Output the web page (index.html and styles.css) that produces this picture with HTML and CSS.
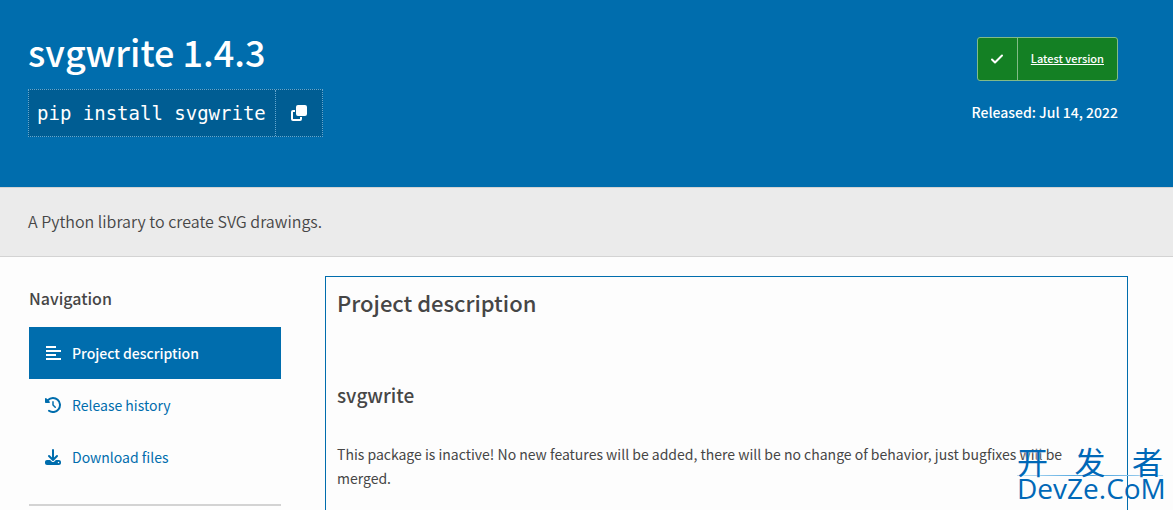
FILE: index.html
```
<!DOCTYPE html>
<html lang="en">
<head>
  <meta charset="UTF-8">
  <meta name="viewport" content="width=device-width, initial-scale=1.0">
  <title>svgwrite 1.4.3</title>
  <link rel="stylesheet" href="styles.css">
</head>
<body>
  <header class="banner">
    <div class="package">
      <h1>svgwrite 1.4.3</h1>
      <div class="pip">
        <code>pip install svgwrite</code>
        <button type="button" aria-label="Copy PIP instructions">
          <svg viewBox="0 0 512 512" width="16" height="16"><path d="M224 0h224a64 64 0 0 1 64 64v224a64 64 0 0 1-64 64H224a64 64 0 0 1-64-64V64a64 64 0 0 1 64-64zM64 160h64v64H64v224h224v-64h64v64a64 64 0 0 1-64 64H64a64 64 0 0 1-64-64V224a64 64 0 0 1 64-64z"/></svg>
        </button>
      </div>
    </div>
    <div class="release">
      <a class="status" href="#latest">
        <span class="check"><svg viewBox="0 0 14 14" width="14" height="14"><path d="M2 7.5l3 3 7-7" fill="none" stroke="currentColor" stroke-width="2" stroke-linecap="round" stroke-linejoin="round"/></svg></span>
        <span class="label">Latest version</span>
      </a>
      <p>Released: <time datetime="2022-07-14">Jul 14, 2022</time></p>
    </div>
  </header>

  <div class="summary">
    <p>A Python library to create SVG drawings.</p>
  </div>

  <main>
    <aside>
      <h2>Navigation</h2>
      <nav>
        <a class="active" href="#description">
          <svg viewBox="0 0 16 16" width="16" height="16"><path d="M1 1h10v2H1zM1 5h15v2H1zM1 9h10v2H1zM1 13h15v2H1z"/></svg>
          Project description
        </a>
        <a href="#history">
          <svg viewBox="0 0 512 512" width="16" height="16"><path d="M75 75 41 41C26 26 0 37 0 58v110c0 13 11 24 24 24h110c21 0 32-26 17-41l-31-31A192 192 0 1 1 146 413a32 32 0 0 0-37 53A256 256 0 1 0 75 75zm181 53c-13 0-24 11-24 24v104c0 6 3 12 7 17l72 72c9 9 25 9 34 0s9-25 0-34l-65-65v-94c0-13-11-24-24-24z"/></svg>
          Release history
        </a>
        <a href="#files">
          <svg viewBox="0 0 512 512" width="16" height="16"><path d="M288 32a32 32 0 0 0-64 0v243l-73-74a32 32 0 0 0-46 46l128 128c13 12 33 12 46 0l128-128a32 32 0 0 0-46-46l-73 74V32zM64 352c-35 0-64 29-64 64v32c0 35 29 64 64 64h384c35 0 64-29 64-64v-32c0-35-29-64-64-64H347l-46 45a64 64 0 0 1-90 0l-46-45H64zm368 56a24 24 0 1 1 0 48 24 24 0 0 1 0-48z"/></svg>
          Download files
        </a>
      </nav>
    </aside>

    <article id="description">
      <h2>Project description</h2>
      <h3>svgwrite</h3>
      <p>This package is inactive! No new features will be added, there will be no change of behavior, just bugfixes will be merged.</p>
    </article>
  </main>

  <div class="watermark">
    <div class="hanzi" lang="zh"><span>开</span><span>发</span><span>者</span></div>
    <div class="domain">DevZe.CoM</div>
  </div>
</body>
</html>
```

FILE: styles.css
```
* { box-sizing: border-box; }

html, body {
  height: 100%;
  overflow: hidden;
}

body {
  display: flex;
  flex-direction: column;
  margin: 0;
  background: #fdfdfd;
  color: #464646;
  font: 14px/24px "Noto Sans CJK SC", "Noto Sans", sans-serif;
}

h1, h2, h3, p { margin: 0; }

a { text-decoration: none; }

svg { fill: currentColor; }

/* Banner */

.banner {
  display: flex;
  justify-content: space-between;
  padding: 27px 55px 50px 28px;
  background: #006dad;
  color: #fff;
}

h1 {
  margin-bottom: 14px;
  font-size: 36px;
  font-weight: 500;
  line-height: 48px;
}

.pip {
  display: flex;
  width: max-content;
  height: 48px;
  border: 1px dotted #66a7ce;
  background: #005d93;
}

.pip code {
  padding: 0 9px 0 8px;
  font: 19px/46px "DejaVu Sans Mono", monospace;
}

.pip button {
  display: grid;
  place-items: center;
  width: 47px;
  border: 0;
  border-left: 1px dotted #66a7ce;
  background: none;
  color: #fff;
}

.release {
  display: flex;
  flex-direction: column;
  align-items: flex-end;
  gap: 19px;
  padding-top: 10px;
  font-weight: 500;
}

.status {
  display: flex;
  align-items: stretch;
  height: 44px;
  border: 1px solid #82bb87;
  border-radius: 3px;
  background: #148024;
  color: #fff;
  font-size: 11px;
  line-height: 40px;
}

.check {
  display: grid;
  place-items: center;
  width: 40px;
  border-right: 1px solid #82bb87;
}

.label {
  padding: 0 13px;
  text-decoration: underline;
}

/* Summary */

.summary {
  padding: 21px 28px 23px;
  border-top: 1px solid #d3d3d3;
  border-bottom: 1px solid #d3d3d3;
  background: #ebebeb;
  font-size: 16px;
  font-weight: 350;
}

/* Layout */

main {
  display: flex;
  flex: 1;
  gap: 44px;
  padding: 19px 45px 0 29px;
}

aside { width: 252px; }

aside h2 {
  padding: 10px 0 17px;
  font-size: 16px;
  font-weight: 500;
}

nav {
  padding-bottom: 21px;
  border-bottom: 2px solid #d3d3d3;
}

nav a {
  display: flex;
  align-items: center;
  gap: 11px;
  height: 52px;
  padding: 0 16px;
  color: #006dad;
}

nav a.active {
  background: #006dad;
  color: #fff;
  font-weight: 500;
}

article {
  flex: 1;
  padding: 9px 11px;
  border: 1px solid #006dad;
  border-bottom: 0;
}

article h2 {
  margin-bottom: 61px;
  font-size: 22px;
  font-weight: 500;
  line-height: 32px;
}

article h3 {
  margin-bottom: 31px;
  font-size: 19px;
  font-weight: 500;
  line-height: 32px;
}

/* Watermark */

.watermark {
  position: absolute;
  right: 10px;
  bottom: 10px;
  width: 146px;
  color: #0068b7;
}

.hanzi {
  display: flex;
  justify-content: space-between;
  font-size: 31px;
  line-height: 28px;
  text-shadow: 0 0 2px #fdfdfd;
}

.domain {
  border-top: 1px solid;
  border-image: linear-gradient(to right, #c4e2f5, #3a9bdc, #c4e2f5) 1;
  font: 28px/24px "Open Sans", sans-serif;
}
```
